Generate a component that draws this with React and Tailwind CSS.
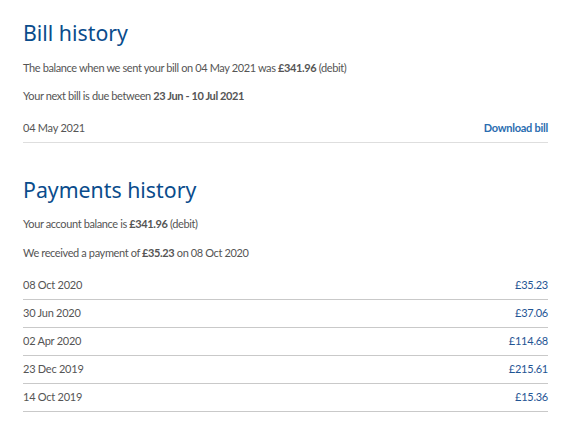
import React from "react";

const payments = [
  { date: "08 Oct 2020", amount: "£35.23" },
  { date: "30 Jun 2020", amount: "£37.06" },
  { date: "02 Apr 2020", amount: "£114.68" },
  { date: "23 Dec 2019", amount: "£215.61" },
  { date: "14 Oct 2019", amount: "£15.36" },
];

function Heading({ children }) {
  return (
    <h2
      className="text-[21.3px] leading-[32px] text-[#0a4c8c] font-normal"
      style={{ fontFamily: '"Noto Sans", sans-serif' }}
    >
      {children}
    </h2>
  );
}

export default function App() {
  return (
    <div
      className="bg-white min-h-screen pl-[23px] pr-[16px] pt-[17px] text-[#555] text-[11px]"
      style={{ fontFamily: 'Lato, "Noto Sans", sans-serif' }}
    >
      {/* bill history */}
      <section>
        <Heading>Bill history</Heading>
        <p className="mt-[11px] leading-4 tracking-[-0.38px]">
          The balance when we sent your bill on 04 May 2021 was{" "}
          <b className="font-bold">£341.96</b> (debit)
        </p>
        <p className="mt-3 leading-4 tracking-[-0.38px]">
          Your next bill is due between <b className="font-bold">23 Jun - 10 Jul 2021</b>
        </p>
        <div className="mt-[11px] h-[28px] flex items-center justify-between border-b border-[#dedede] tracking-[-0.25px]">
          <span>04 May 2021</span>
          <a href="#" className="font-bold text-[#2a6db0]">
            Download bill
          </a>
        </div>
      </section>

      {/* payments history */}
      <section className="mt-[31px]">
        <Heading>Payments history</Heading>
        <p className="mt-[10px] leading-4 tracking-[-0.38px]">
          Your account balance is <b className="font-bold">£341.96</b> (debit)
        </p>
        <p className="mt-[13px] leading-4 tracking-[-0.38px]">
          We received a payment of <b className="font-bold">£35.23</b> on 08 Oct 2020
        </p>
        <div className="mt-[11px] tracking-[-0.25px]">
          {payments.map((p) => (
            <div
              key={p.date}
              className="h-[28px] flex items-center justify-between border-b border-[#c9c9c9]"
            >
              <span>{p.date}</span>
              <span className="text-[#1f5594]">{p.amount}</span>
            </div>
          ))}
        </div>
      </section>
    </div>
  );
}
